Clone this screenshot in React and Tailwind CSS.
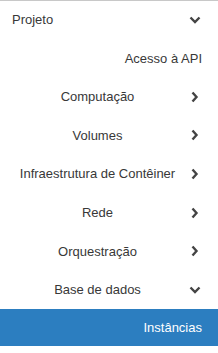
import React from "react";

const ITEMS = [
  { label: "Acesso à API", icon: null },
  { label: "Computação", icon: "right" },
  { label: "Volumes", icon: "right" },
  { label: "Infraestrutura de Contêiner", icon: "right" },
  { label: "Rede", icon: "right" },
  { label: "Orquestração", icon: "right" },
  { label: "Base de dados", icon: "down" },
];

function Chevron({ dir }) {
  return (
    <svg width="12" height="12" viewBox="0 0 12 12" className="shrink-0 text-[#444]">
      {dir === "down" ? (
        <polyline points="1.5,3.5 6,8 10.5,3.5" fill="none" stroke="currentColor" strokeWidth="2.4" />
      ) : (
        <polyline points="3.5,1.5 7.5,6 3.5,10.5" fill="none" stroke="currentColor" strokeWidth="2.4" />
      )}
    </svg>
  );
}

export default function App() {
  return (
    <div className="w-[218px] h-[353px] bg-white border-t border-[#c8c8c8] text-[13px] text-[#383838] font-['Liberation_Sans',Arial,sans-serif]">
      <div className="flex items-center justify-between h-[38px] pl-3 pr-[17px]">
        <span>Projeto</span>
        <Chevron dir="down" />
      </div>
      <div className="flex flex-col">
        {ITEMS.map((it) =>
          it.icon ? (
            <div key={it.label} className="flex items-center h-[38.6px]">
              <span className="w-[195px] shrink-0 text-center">{it.label}</span>
              <span className="ml-[-6px] flex">
                <Chevron dir={it.icon} />
              </span>
            </div>
          ) : (
            <div key={it.label} className="flex items-center justify-end h-[38.6px] pr-4">
              <span>{it.label}</span>
            </div>
          )
        )}
        <div className="flex items-center justify-end h-[37px] pr-4 bg-[#2c7ec0] text-white">
          Instâncias
        </div>
      </div>
    </div>
  );
}
